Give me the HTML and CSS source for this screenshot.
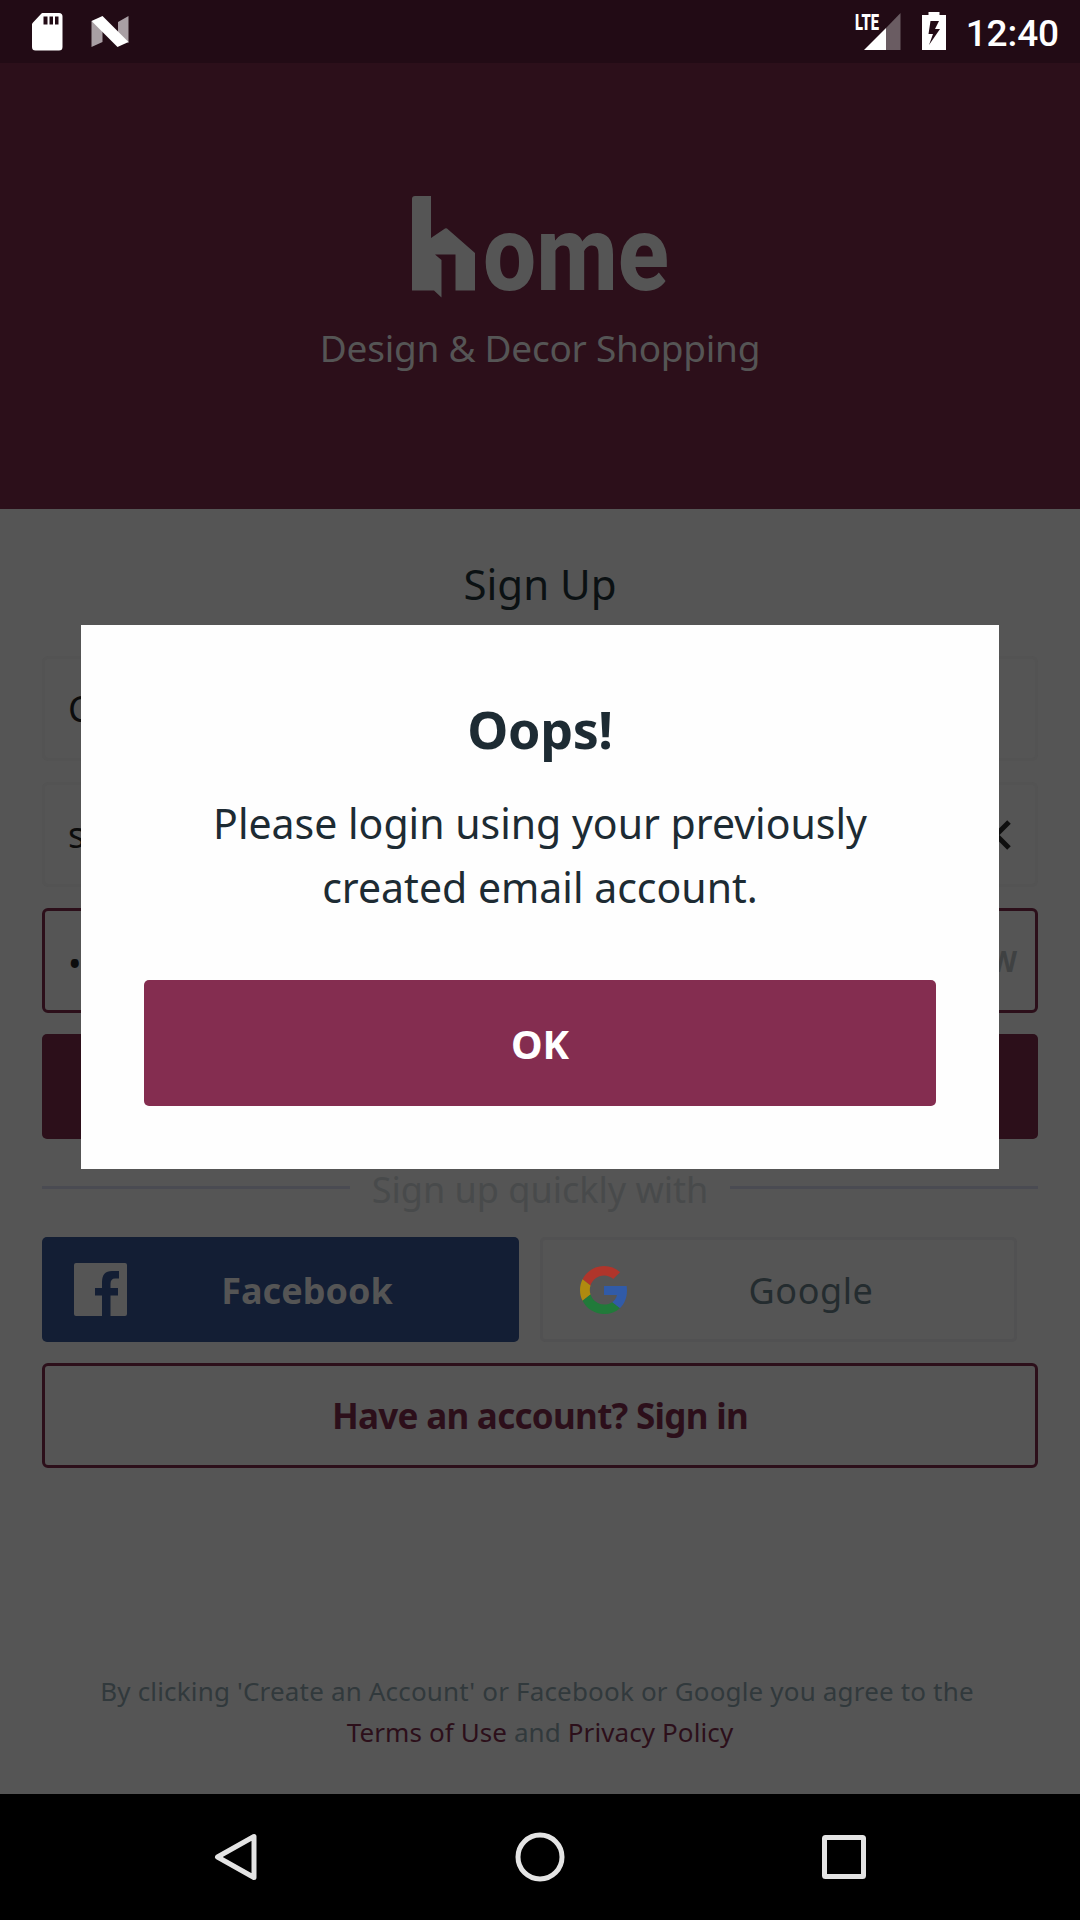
FILE: index.html
```html
<!DOCTYPE html>
<html lang="en">
<head>
<meta charset="utf-8">
<title>Sign Up</title>
<link rel="stylesheet" href="styles.css">
</head>
<body>
<div class="screen">
  <div class="status">
    <svg class="sd" width="31" height="38" viewBox="0 0 31 38"><path fill="#fff" fill-rule="evenodd" d="M10.500 0H27Q30.500 0 30.500 3.500V34Q30.500 37.500 27 37.500H3.500Q0 37.500 0 34V11.500Q0 10.500 1 9.500L9 1Q9.800 0 10.500 0ZM11.500 3.500V11.500H15.500V3.500ZM17.500 3.500V11.500H21V3.500ZM23 3.500V11.500H26.500V3.500Z"/></svg>
    <svg class="nougat" width="38" height="32" viewBox="0 0 38 32"><path fill="#a99fa4" d="M.500 5L11.500 9V26L.500 31ZM27 6L37.500 0V27L27 20Z"/><path fill="#fff" d="M.500 5L11.500 0L37.500 26L26.500 31Z"/></svg>
    <div class="status-right">
      <svg class="signal" width="46" height="38" viewBox="0 0 46 38"><text class="lte" x="0" y="16.500" textLength="24" lengthAdjust="spacingAndGlyphs">LTE</text><path fill="#6a5c62" d="M45.500 0V37H31V15Z"/><path fill="#fff" d="M9 37L31 15V37Z"/></svg>
      <svg class="battery" width="24" height="38" viewBox="0 0 24 38"><path fill="#fff" fill-rule="evenodd" d="M6.500 0H17.500V3H24V38H0V3H6.500ZM8.500 9L6.500 22H11L7 33L18 17H13L17 9Z"/></svg>
      <span class="clock">12:40</span>
    </div>
  </div>
  <header class="hero">
    <svg class="logo" width="270" height="110" viewBox="405 190 270 110">
      <path fill="#555" d="M415 196H431V238L445 228.500Q446 228 447 228.500L475 253V290.500H455.500V254.500H435L441.500 260V297.500L434 290.500H412V199Q412 196 415 196Z"/>
      <text class="wordmark" x="483" y="289.500" textLength="186" lengthAdjust="spacingAndGlyphs">ome</text>
    </svg>
    <p class="tagline">Design &amp; Decor Shopping</p>
  </header>
  <main class="form">
    <h1 class="title">Sign Up</h1>
    <div class="field"><span>C</span></div>
    <div class="field"><span>s</span>
      <svg width="30" height="30" viewBox="0 0 30 30"><path d="M2 2L28 28M28 2L2 28" stroke="#0e0e0e" stroke-width="5"/></svg>
    </div>
    <div class="field active"><span class="dots">•</span><b class="show">SHOW</b></div>
    <div class="create"></div>
    <div class="divider"><i></i><span>Sign up quickly with</span><i></i></div>
    <div class="social">
      <div class="facebook">
        <svg width="53" height="53" viewBox="0 0 53 53"><path fill="#555" d="M2 0H51Q53 0 53 2V51Q53 53 51 53H36.500V32.500H44V25H36.500V21Q36.500 15.500 41 15.500H45V8H38Q28 8 28 19V25H21V32.500H28V53H2Q0 53 0 51V2Q0 0 2 0Z"/></svg>
        <span>Facebook</span>
      </div>
      <div class="google">
        <svg width="47" height="48" viewBox="0 0 46.980 48"><path fill="#b0352b" d="M24 9.500c3.540 0 6.710 1.220 9.210 3.600l6.850-6.850C35.900 2.380 30.470 0 24 0 14.620 0 6.510 5.380 2.560 13.220l7.980 6.190C12.430 13.720 17.740 9.500 24 9.500z"/><path fill="#315ba8" d="M46.980 24.550c0-1.570-.15-3.090-.38-4.550H24v9.020h12.940c-.58 2.960-2.260 5.480-4.780 7.180l7.730 6c4.510-4.180 7.090-10.360 7.090-17.650z"/><path fill="#b08a10" d="M10.530 28.590c-.48-1.450-.76-2.990-.76-4.590s.27-3.140.76-4.590l-7.980-6.190C.92 16.460 0 20.120 0 24c0 3.880.92 7.540 2.560 10.780z"/><path fill="#217a3a" d="M24 48c6.480 0 11.930-2.130 15.890-5.810l-7.730-6c-2.150 1.450-4.920 2.300-8.160 2.300-6.260 0-11.570-4.220-13.470-9.910l-7.980 6.190C6.510 42.620 14.620 48 24 48z"/></svg>
        <span>Google</span>
      </div>
    </div>
    <div class="signin">Have an account? Sign in</div>
    <p class="terms"><span class="line-one">By clicking 'Create an Account' or Facebook or Google you agree to the</span><br><span class="line-two"><em>Terms of Use</em> and <em>Privacy Policy</em></span></p>
  </main>
  <nav class="nav">
    <svg width="50" height="50" viewBox="0 0 50 50"><path d="M43 4.500V45.500L6.500 25Z"/></svg>
    <svg width="50" height="50" viewBox="0 0 50 50"><circle cx="25" cy="25" r="22"/></svg>
    <svg width="50" height="50" viewBox="0 0 50 50"><rect x="5.500" y="5.500" width="39" height="39" rx="1"/></svg>
  </nav>
  <div class="modal">
    <h2>Oops!</h2>
    <p>Please login using your previously<br>created email account.</p>
    <div class="ok">OK</div>
  </div>
</div>
</body>
</html>
```
FILE: styles.css
```css
* { box-sizing: border-box; margin: 0; padding: 0; }

body { background: #555; font-family: "Noto Sans", sans-serif; }

svg { display: block; flex: none; }

.screen {
  position: relative;
  display: flex;
  flex-direction: column;
  width: 1080px;
  height: 1920px;
  overflow: hidden;
  background: #555;
}

.status {
  display: flex;
  align-items: flex-start;
  height: 63px;
  padding: 12px 21px 0 32px;
  background: #220b15;
}
.sd { margin-top: 1px; }
.nougat { margin: 4px 0 0 28px; }
.status-right { display: flex; margin-left: auto; }
.signal { margin-top: 1px; overflow: visible; }
.lte { font: 900 22px Roboto, sans-serif; fill: #fff; }
.battery { margin: 0 20px 0 21px; }
.clock { padding-top: 1px; font: 500 37px/42px Roboto, sans-serif; color: #fff; letter-spacing: -.1px; }

.hero {
  display: flex;
  flex-direction: column;
  align-items: center;
  height: 446px;
  padding-top: 127px;
  background: #2c0f1a;
}
.logo { overflow: visible; }
.wordmark { font: 800 106px Roboto, sans-serif; fill: #555; }
.tagline {
  margin-top: 23px;
  font-size: 37px;
  line-height: 50px;
  letter-spacing: -.26px;
  color: #555;
}

.form {
  display: flex;
  flex-direction: column;
  flex: 1;
  padding: 45px 42px 0;
}
.title {
  margin-bottom: 42px;
  font-size: 42px;
  font-weight: 400;
  line-height: 60px;
  text-align: center;
  color: #0b1113;
}
.field {
  display: flex;
  align-items: center;
  justify-content: space-between;
  height: 105px;
  margin-bottom: 21px;
  padding: 0 24px 0 23px;
  border: 3px solid #535353;
  border-radius: 6px;
  font-size: 36px;
  color: #0c0c0c;
}
.field.active { padding: 0 18px 0 23px; border-color: #2c0f1a; }
.dots { padding-top: 6px; }
.show { font-size: 28px; color: #3f4142; }
.create { height: 105px; border-radius: 5px; background: #2c0f1a; }

.divider {
  display: flex;
  align-items: center;
  justify-content: space-between;
  height: 50px;
  margin: 26px 0 22px;
}
.divider i { width: 308px; height: 3px; margin-bottom: 6px; background: #4a4b52; }
.divider span { font-size: 36px; line-height: 50px; color: #484a4b; }

.social { display: grid; grid-template-columns: 477px 477px; gap: 21px; height: 105px; }
.facebook, .google { display: flex; align-items: center; border-radius: 5px; font-size: 36px; }
.facebook { padding: 0 32px; background: #131e34; font-weight: 700; color: #555; }
.google { padding: 0 19px 0 37px; border: 3px solid #515152; letter-spacing: .56px; color: #242c2f; }
.facebook span, .google span { flex: 1; padding-top: 2px; text-align: center; }

.signin {
  height: 105px;
  margin-top: 21px;
  border: 3px solid #2c0f1a;
  border-radius: 6px;
  font-size: 35px;
  font-weight: 700;
  line-height: 99px;
  letter-spacing: -.7px;
  text-align: center;
  color: #2c0f1a;
}

.terms {
  margin-top: 203px;
  font-size: 26px;
  line-height: 41px;
  text-align: center;
  white-space: nowrap;
  color: #31393c;
}
.line-one { margin-right: 6px; letter-spacing: .17px; }
.line-two { letter-spacing: .1px; }
.terms em { font-style: normal; color: #2c0f1a; }

.nav {
  display: flex;
  align-items: center;
  justify-content: space-between;
  height: 126px;
  padding: 0 211px;
  background: #000;
}
.nav svg { overflow: visible; fill: none; stroke: #e4e4e4; stroke-width: 5; stroke-linejoin: round; }

.modal {
  position: absolute;
  left: 81px;
  top: 625px;
  width: 918px;
  height: 544px;
  padding: 69px 63px 0;
  background: #fefefe;
  text-align: center;
  color: #1d2b33;
}
.modal h2 { font-size: 52px; font-weight: 700; line-height: 70px; letter-spacing: -.4px; }
.modal p { margin: 27px 0 61px; font-size: 41px; line-height: 64px; }
.ok {
  height: 126px;
  border-radius: 5px;
  background: #842d50;
  font-size: 40px;
  font-weight: 700;
  line-height: 127px;
  color: #fff;
}
```
